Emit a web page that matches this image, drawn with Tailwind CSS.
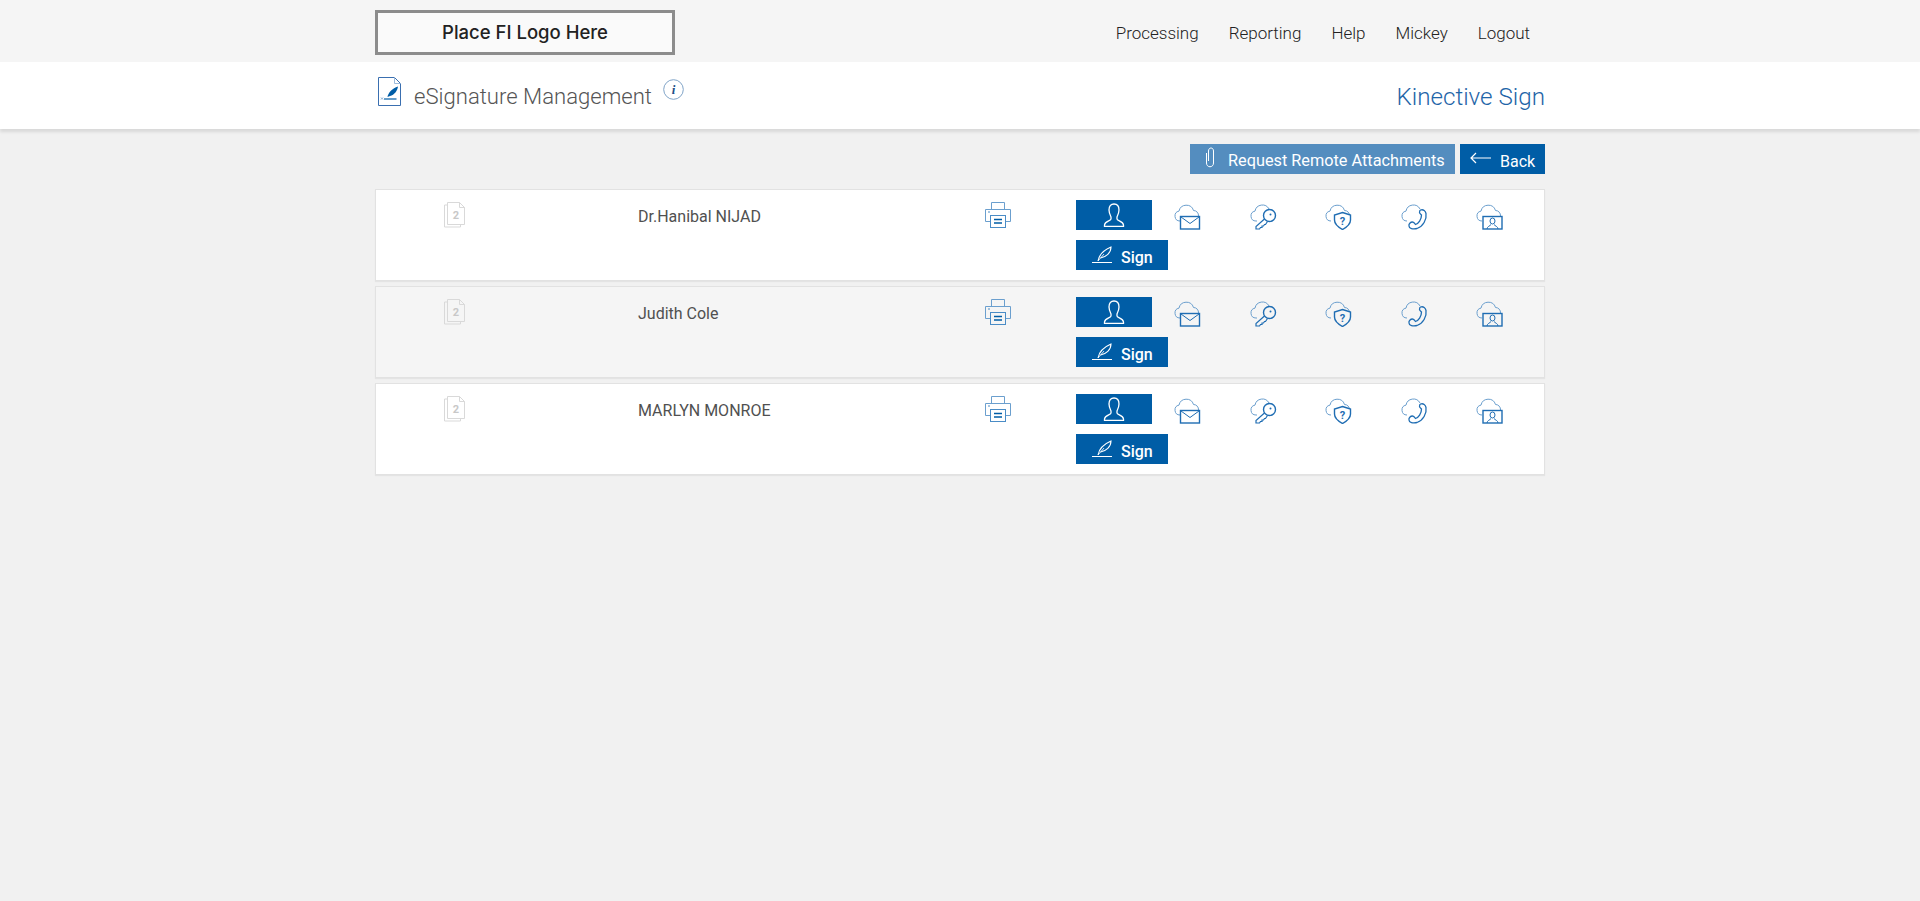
<!DOCTYPE html>
<html lang="en">
<head>
    <meta charset="UTF-8" />
    <title>eSignature Management</title>
    <script src="https://cdn.jsdelivr.net/npm/@tailwindcss/browser@4"></script>
</head>
<body class="bg-[#f1f1f1] min-h-screen font-['Roboto',sans-serif] overflow-hidden">
    <!-- Shared row icons -->
    <svg class="absolute w-0 h-0" aria-hidden="true">
        <symbol id="docs" viewBox="0 0 22 26" fill="none" stroke="#d9d9d9">
            <path d="M3 3H.5v22h16v-2"/><path d="M3.500.5h12l5 5v17h-17z"/><path d="M15.500.5v5h5"/>
        </symbol>
        <symbol id="printer" viewBox="0 0 26 26" fill="none" stroke="#6b9fce">
            <path d="M6.500 7V.5h13V7"/><path d="M5.500 19.500H.5V7.500h25v12h-5"/>
            <rect x="5.500" y="13.500" width="15" height="12" fill="currentColor" stroke="#4a8cc6"/>
            <path d="M9 17.500h8M9 21h8" stroke="#005da6" stroke-width="1.400"/><path d="M3 10h2" stroke="#4a8cc6"/>
        </symbol>
        <symbol id="cloud-mail" viewBox="0 0 27 27" fill="none">
            <path d="M6 18A5 5 0 0 1 5 8.100 7.500 7.500 0 0 1 19.500 7.500 5 5 0 0 1 24.500 13" stroke="#6b9fce"/>
            <rect x="6.500" y="13.500" width="19" height="12.500" fill="currentColor" stroke="#1f6db3" stroke-width="1.400"/>
            <path d="m7 14 9 6.500 9-6.500" stroke="#1f6db3"/>
        </symbol>
        <symbol id="cloud-key" viewBox="0 0 27 27" fill="none">
            <path d="M7 18H6A5 5 0 0 1 5 8.100 7.500 7.500 0 0 1 19 6" stroke="#6b9fce"/>
            <path d="M15 15.500 6 23.500v2.500h3.500l1-1.500h1.500v-1.500h1.500l1-1.500h1l2-3" fill="currentColor" stroke="#1f6db3" stroke-width="1.200"/>
            <circle cx="19.500" cy="12.500" r="6" fill="currentColor" stroke="#1f6db3" stroke-width="1.400"/>
            <circle cx="20.500" cy="11.500" r="1" fill="#1f6db3"/>
        </symbol>
        <symbol id="cloud-shield" viewBox="0 0 27 27" fill="none">
            <path d="M6 18A5 5 0 0 1 5 8.100 7.500 7.500 0 0 1 19.500 7.500 5 5 0 0 1 24.500 13" stroke="#6b9fce"/>
            <path d="M17.500 9.500l8 2.500v5c0 4-3.500 7-8 9.500-4.500-2.500-8-5.500-8-9.500v-5z" fill="currentColor" stroke="#1f6db3" stroke-width="1.400"/>
        </symbol>
        <symbol id="cloud-phone" viewBox="0 0 27 27" fill="none">
            <path d="M6 18A5 5 0 0 1 5 8.100 7.500 7.500 0 0 1 19 6" stroke="#6b9fce"/>
            <path d="M19.500 7c3-1 5 1 5.500 3.500 1 6-3 13-9 15-4 1-8 0-8-2.500-.5-2 1.500-4 3.500-4 1 0 2 1 3 2.500 3-1 6-5 6-9.500-1-1-2-1.500-2-2.500 0-1.500 0-2 1-2.500z" fill="currentColor" stroke="#1f6db3" stroke-width="1.300"/>
        </symbol>
        <symbol id="cloud-contact" viewBox="0 0 27 27" fill="none">
            <path d="M6 18A5 5 0 0 1 5 8.100 7.500 7.500 0 0 1 19.500 7.500 5 5 0 0 1 24.500 13" stroke="#6b9fce"/>
            <rect x="7" y="13.500" width="19" height="12.500" fill="currentColor" stroke="#1f6db3" stroke-width="1.400"/>
            <ellipse cx="16.500" cy="18" rx="2.500" ry="3" stroke="#1f6db3"/>
            <path d="M11 26c0-2.500 3-3 4-4.500M22 26c0-2.500-3-3-4-4.500" stroke="#1f6db3"/>
        </symbol>
        <symbol id="user" viewBox="0 0 22 24" fill="none" stroke="#fff" stroke-width="1.300">
            <path d="M8 14c-1-2-2-4-2-7 0-4 2-6 5-6s5 2 5 6c0 3-1 5-2 7v2c0 2 6 2 6.500 6v1.300h-19V22c.5-4 6.500-4 6.500-6z"/>
        </symbol>
        <symbol id="feather" viewBox="0 0 22 18" fill="none" stroke="#fff">
            <path d="M1 16.500h20" stroke-width="1"/><path d="M7 15C8 9 13 4 20 1c0 6-5 10-10.500 11" stroke-width="1.100"/><path d="M7 15 13 8" stroke-width=".8"/>
        </symbol>
    </svg>

    <!-- Top navigation -->
    <div class="bg-[#f5f5f5] h-[62px]">
        <div class="w-[1170px] mx-auto flex justify-between">
            <div class="w-[300px] h-[45px] mt-[10px] border-[3px] border-[#8c8c8c] bg-[#fafafa] flex items-center justify-center font-['Inter',sans-serif] font-medium text-[18.500px] text-[#222]">Place FI Logo Here</div>
            <nav class="flex gap-[30px] pr-[15px] pt-[24px] text-[17px] leading-[19px] font-light text-[#222]">
                <a>Processing</a>
                <a>Reporting</a>
                <a>Help</a>
                <a>Mickey</a>
                <a>Logout</a>
            </nav>
        </div>
    </div>

    <!-- Page title -->
    <div class="bg-white h-[67px] shadow-[0_3px_3px_rgba(0,0,0,0.1)] relative">
        <div class="w-[1170px] mx-auto flex justify-between">
            <div class="flex">
                <svg class="mt-[15px] ml-[3px]" width="23" height="29" viewBox="0 0 23 29" fill="none">
                    <path d="M.5.5h16l6 6v22H.5z" stroke="#3a6fb0"/>
                    <path d="M16.500.5v6h6" stroke="#9dbbdc"/>
                    <path d="M9.500 20c.5-4 5-9 10.500-10.500-.5 4-3.500 8.500-8 9.500z" fill="#005da6"/>
                    <path d="M6 22h12.500" stroke="#005da6" stroke-width="1.200"/>
                    <path d="M3 20.500l2 2M5 20.500l-2 2" stroke="#5a8cc0" stroke-width=".7"/>
                </svg>
                <span class="ml-[13px] mt-[21px] text-[22.100px] leading-[26px] font-light text-[#555]">eSignature Management</span>
                <svg class="ml-[11px] mt-[17px]" width="21" height="21" viewBox="0 0 21 21" fill="none">
                    <circle cx="10.500" cy="10.500" r="9.800" stroke="#7fa3c7"/>
                    <text x="10.500" y="15" text-anchor="middle" font-family="Liberation Serif" font-style="italic" font-weight="700" font-size="13" fill="#1d4f86">i</text>
                </svg>
            </div>
            <span class="mt-[21px] text-[24.200px] leading-[28px] font-light text-[#1f65a8]">Kinective Sign</span>
        </div>
    </div>

    <div class="w-[1170px] mx-auto">
        <!-- Action buttons -->
        <div class="flex justify-end gap-[5px] mt-[15px] mb-[15px]">
            <button class="w-[265px] h-[30px] bg-[#548dbf] text-white text-[16.300px] flex items-center pl-[14px]">
                <svg class="mb-[4px]" width="12" height="21" viewBox="0 0 12 21" fill="none" stroke="#fff" stroke-width="1"><path d="M2.500 6v10c0 5 7 5 7 0V4c0-4-5-4-5 0v10"/></svg>
                <span class="ml-[12px] pt-[5px]">Request Remote Attachments</span>
            </button>
            <button class="w-[85px] h-[30px] bg-[#005da6] text-white text-[16px] flex items-center pl-[10px]">
                <svg class="mb-[2px]" width="21" height="12" viewBox="0 0 21 12" fill="none" stroke="#fff" stroke-width="1.200"><path d="M21 6H1M6 1 1 6l5 5"/></svg>
                <span class="ml-[9px] pt-[5px]">Back</span>
            </button>
        </div>

        <!-- Signer rows -->
        <div class="flex flex-col gap-[5px]">
            <div class="flex h-[92px] bg-white border border-[#e2e2e2] shadow-[0_1px_1px_rgba(0,0,0,0.05)]">
                <div class="w-[262px] pl-[68px] pt-[12px]">
                    <svg width="22" height="26"><use href="#docs"/><text x="12" y="16.500" text-anchor="middle" font-family="Roboto" font-weight="700" font-size="11" fill="#c8c8c8">2</text></svg>
                </div>
                <div class="w-[347px] pt-[17px] text-[16px] leading-[19px] text-[#505050]">Dr.Hanibal NIJAD</div>
                <div class="w-[91px] pt-[12px]">
                    <svg class="text-white" width="26" height="26"><use href="#printer"/></svg>
                </div>
                <div class="flex-1 pt-[10px]">
                    <div class="flex items-start">
                        <button class="w-[76px] h-[30px] bg-[#005da6] flex items-center justify-center">
                            <svg width="22" height="24"><use href="#user"/></svg>
                        </button>
                        <div class="flex ml-[22px] gap-[48.500px] pt-[3px] text-white">
                            <svg width="27" height="27"><use href="#cloud-mail"/></svg>
                            <svg width="27" height="27"><use href="#cloud-key"/></svg>
                            <svg width="27" height="27"><use href="#cloud-shield"/><text x="17.500" y="21.500" text-anchor="middle" font-family="Roboto" font-weight="700" font-size="11" fill="#1f6db3">?</text></svg>
                            <svg width="27" height="27"><use href="#cloud-phone"/></svg>
                            <svg width="27" height="27"><use href="#cloud-contact"/></svg>
                        </div>
                    </div>
                    <button class="mt-[10px] w-[92px] h-[30px] bg-[#005da6] text-white text-[16px] font-medium flex items-center pl-[15px]">
                        <svg width="22" height="18"><use href="#feather"/></svg>
                        <span class="ml-[8px] pt-[5px]">Sign</span>
                    </button>
                </div>
            </div>

            <div class="flex h-[92px] bg-[#f5f5f5] border border-[#e2e2e2] shadow-[0_1px_1px_rgba(0,0,0,0.05)]">
                <div class="w-[262px] pl-[68px] pt-[12px]">
                    <svg width="22" height="26"><use href="#docs"/><text x="12" y="16.500" text-anchor="middle" font-family="Roboto" font-weight="700" font-size="11" fill="#c8c8c8">2</text></svg>
                </div>
                <div class="w-[347px] pt-[17px] text-[16px] leading-[19px] text-[#505050]">Judith Cole</div>
                <div class="w-[91px] pt-[12px]">
                    <svg class="text-[#f5f5f5]" width="26" height="26"><use href="#printer"/></svg>
                </div>
                <div class="flex-1 pt-[10px]">
                    <div class="flex items-start">
                        <button class="w-[76px] h-[30px] bg-[#005da6] flex items-center justify-center">
                            <svg width="22" height="24"><use href="#user"/></svg>
                        </button>
                        <div class="flex ml-[22px] gap-[48.500px] pt-[3px] text-[#f5f5f5]">
                            <svg width="27" height="27"><use href="#cloud-mail"/></svg>
                            <svg width="27" height="27"><use href="#cloud-key"/></svg>
                            <svg width="27" height="27"><use href="#cloud-shield"/><text x="17.500" y="21.500" text-anchor="middle" font-family="Roboto" font-weight="700" font-size="11" fill="#1f6db3">?</text></svg>
                            <svg width="27" height="27"><use href="#cloud-phone"/></svg>
                            <svg width="27" height="27"><use href="#cloud-contact"/></svg>
                        </div>
                    </div>
                    <button class="mt-[10px] w-[92px] h-[30px] bg-[#005da6] text-white text-[16px] font-medium flex items-center pl-[15px]">
                        <svg width="22" height="18"><use href="#feather"/></svg>
                        <span class="ml-[8px] pt-[5px]">Sign</span>
                    </button>
                </div>
            </div>

            <div class="flex h-[92px] bg-white border border-[#e2e2e2] shadow-[0_1px_1px_rgba(0,0,0,0.05)]">
                <div class="w-[262px] pl-[68px] pt-[12px]">
                    <svg width="22" height="26"><use href="#docs"/><text x="12" y="16.500" text-anchor="middle" font-family="Roboto" font-weight="700" font-size="11" fill="#c8c8c8">2</text></svg>
                </div>
                <div class="w-[347px] pt-[17px] text-[16px] leading-[19px] text-[#505050]">MARLYN MONROE</div>
                <div class="w-[91px] pt-[12px]">
                    <svg class="text-white" width="26" height="26"><use href="#printer"/></svg>
                </div>
                <div class="flex-1 pt-[10px]">
                    <div class="flex items-start">
                        <button class="w-[76px] h-[30px] bg-[#005da6] flex items-center justify-center">
                            <svg width="22" height="24"><use href="#user"/></svg>
                        </button>
                        <div class="flex ml-[22px] gap-[48.500px] pt-[3px] text-white">
                            <svg width="27" height="27"><use href="#cloud-mail"/></svg>
                            <svg width="27" height="27"><use href="#cloud-key"/></svg>
                            <svg width="27" height="27"><use href="#cloud-shield"/><text x="17.500" y="21.500" text-anchor="middle" font-family="Roboto" font-weight="700" font-size="11" fill="#1f6db3">?</text></svg>
                            <svg width="27" height="27"><use href="#cloud-phone"/></svg>
                            <svg width="27" height="27"><use href="#cloud-contact"/></svg>
                        </div>
                    </div>
                    <button class="mt-[10px] w-[92px] h-[30px] bg-[#005da6] text-white text-[16px] font-medium flex items-center pl-[15px]">
                        <svg width="22" height="18"><use href="#feather"/></svg>
                        <span class="ml-[8px] pt-[5px]">Sign</span>
                    </button>
                </div>
            </div>
        </div>
    </div>
</body>
</html>
